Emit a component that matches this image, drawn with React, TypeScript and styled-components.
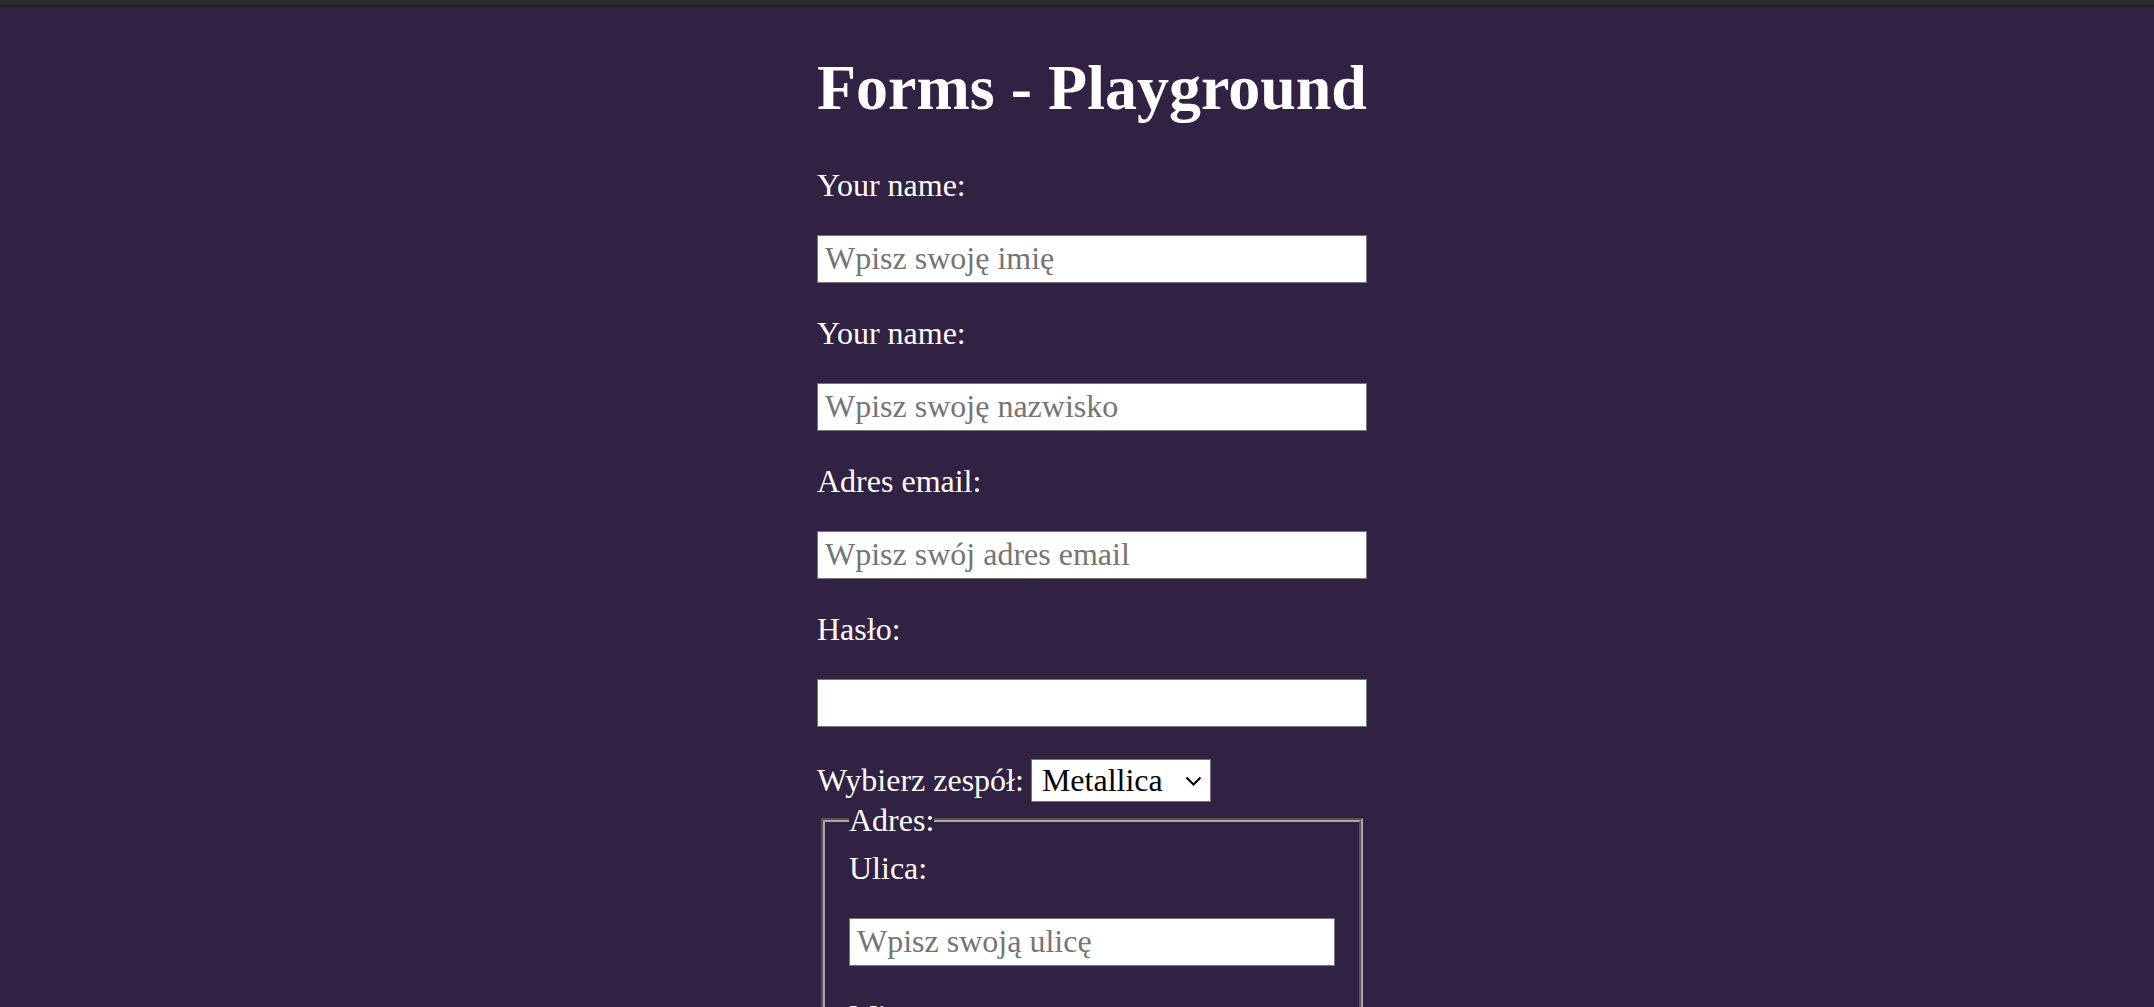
import React from "react";
import styled, { createGlobalStyle } from "styled-components";

const GlobalStyle = createGlobalStyle`
  html, body {
    margin: 0;
    padding: 0;
    background: #312142;
  }
  body {
    font-family: "Liberation Serif", "Times New Roman", serif;
    font-size: 32px;
    color: #ffffff;
  }
`;

const TopStrip = styled.div`
  position: fixed;
  top: 0;
  left: 0;
  right: 0;
  height: 5px;
  background: #2e2e2e;
  border-bottom: 2px solid #1e1e1e;
  z-index: 10;
`;

const Page = styled.div`
  padding: 8px;
`;

const Container = styled.main`
  width: 550px;
  padding-left: 30px;
  margin: 0 auto;
`;

const Title = styled.h1`
  font-size: 64px;
  font-weight: bold;
  margin: 42.5px 0 42px;
  line-height: normal;
`;

const Form = styled.form`
  display: flex;
  flex-direction: column;
`;

const FieldLabel = styled.label`
  display: block;
  line-height: normal;
  margin-bottom: 31px;
`;

const TextInput = styled.input`
  display: block;
  box-sizing: border-box;
  width: 100%;
  height: 48px;
  margin: 0 0 32px 0;
  padding: 0 7px;
  border: 1px solid #767676;
  border-radius: 0;
  background: #ffffff;
  color: #000000;
  font-family: "Liberation Serif", "Times New Roman", serif;
  font-size: 32px;
  outline: none;
  &::placeholder {
    color: #757575;
  }
`;

const SelectRow = styled.div`
  display: flex;
  align-items: center;
  line-height: normal;
  height: 43px;
  gap: 7px;
`;

const SelectWrap = styled.div`
  position: relative;
  width: 180px;
  height: 43px;
`;

const Select = styled.select`
  appearance: none;
  -webkit-appearance: none;
  box-sizing: border-box;
  width: 100%;
  height: 100%;
  padding: 0 0 0 10px;
  border: 1px solid #767676;
  border-radius: 0;
  background: #ffffff;
  color: #000000;
  font-family: "Liberation Serif", "Times New Roman", serif;
  font-size: 32px;
  outline: none;
`;

const Chevron = styled.svg`
  position: absolute;
  right: 9px;
  top: 17px;
  width: 17px;
  height: 10px;
  pointer-events: none;
`;

const Fieldset = styled.fieldset`
  margin: 0 4px;
  padding: 11.2px 24px 20px;
  border: 4px groove #a8a8a8;
  display: flex;
  flex-direction: column;
`;

const Legend = styled.legend`
  padding: 0;
  line-height: normal;
`;

export default function App() {
  return (
    <>
      <GlobalStyle />
      <TopStrip />
      <Page>
        <Container>
          <Title>Forms - Playground</Title>
          <Form onSubmit={(e) => e.preventDefault()}>
            <FieldLabel htmlFor="imie">Your name:</FieldLabel>
            <TextInput id="imie" type="text" placeholder="Wpisz swoję imię" />
            <FieldLabel htmlFor="nazwisko">Your name:</FieldLabel>
            <TextInput id="nazwisko" type="text" placeholder="Wpisz swoję nazwisko" />
            <FieldLabel htmlFor="email">Adres email:</FieldLabel>
            <TextInput id="email" type="email" placeholder="Wpisz swój adres email" />
            <FieldLabel htmlFor="haslo">Hasło:</FieldLabel>
            <TextInput id="haslo" type="password" />
            <SelectRow>
              <label htmlFor="zespol">Wybierz zespół:</label>
              <SelectWrap>
                <Select id="zespol" defaultValue="metallica">
                  <option value="metallica">Metallica</option>
                  <option value="acdc">AC/DC</option>
                  <option value="ironmaiden">Iron Maiden</option>
                </Select>
                <Chevron viewBox="0 0 17 10">
                  <polyline
                    points="1.5,1.5 8.5,8.5 15.5,1.5"
                    fill="none"
                    stroke="#000"
                    strokeWidth="2"
                  />
                </Chevron>
              </SelectWrap>
            </SelectRow>
            <Fieldset>
              <Legend>Adres:</Legend>
              <FieldLabel htmlFor="ulica">Ulica:</FieldLabel>
              <TextInput id="ulica" type="text" placeholder="Wpisz swoją ulicę" />
              <FieldLabel htmlFor="miasto">Miasto:</FieldLabel>
              <TextInput id="miasto" type="text" placeholder="Wpisz swoje miasto" />
              <FieldLabel htmlFor="kod">Kod pocztowy:</FieldLabel>
              <TextInput id="kod" type="text" placeholder="Wpisz swój kod pocztowy" />
            </Fieldset>
          </Form>
        </Container>
      </Page>
    </>
  );
}
